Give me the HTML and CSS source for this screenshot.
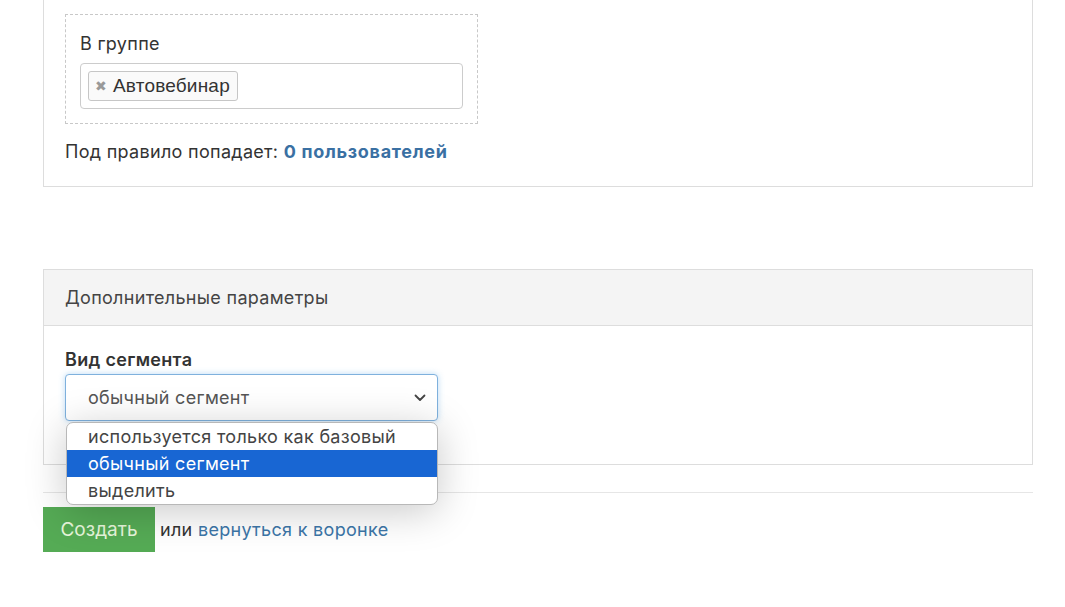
FILE: index.html
```html
<!DOCTYPE html>
<html lang="ru">
<head>
<meta charset="utf-8">
<title>Сегмент</title>
<link rel="stylesheet" href="styles.css">
</head>
<body>
<div class="page">
  <div class="panel panel-top">
    <div class="rule-box">
      <div class="rule-label">В группе</div>
      <div class="tag-input">
        <span class="chip"><span class="chip-x">✖</span>Автовебинар</span>
      </div>
    </div>
    <div class="rule-count">Под правило попадает: <a class="count-link" href="#">0 пользователей</a></div>
  </div>

  <div class="panel panel-extra">
    <div class="panel-head">Дополнительные параметры</div>
    <div class="panel-body">
      <div class="field-label">Вид сегмента</div>
      <div class="select-wrap">
        <div class="select">
          <span>обычный сегмент</span>
          <svg class="chev" width="12" height="8" viewBox="0 0 12 8"><path d="M1.5 1.5 L6 6 L10.5 1.5" fill="none" stroke="#444" stroke-width="1.8" stroke-linecap="round" stroke-linejoin="round"/></svg>
        </div>
        <div class="dropdown">
          <div class="opt">используется только как базовый</div>
          <div class="opt opt-sel">обычный сегмент</div>
          <div class="opt">выделить</div>
        </div>
      </div>
    </div>
  </div>

  <div class="actions">
    <button class="btn-create">Создать</button>
    <span class="or">или <a class="back-link" href="#">вернуться к воронке</a></span>
  </div>
</div>
</body>
</html>
```
FILE: styles.css
```css
html, body {
  margin: 0;
  padding: 0;
  background: #fff;
}
body {
  font-family: Inter, "Noto Sans", sans-serif;
  color: #333;
  font-size: 18px;
  letter-spacing: 0.3px;
}
.page {
  width: 990px;
  margin-left: 43px;
}
.panel {
  border: 1px solid #dddddd;
  box-sizing: border-box;
}
.panel-top {
  border-top: none;
  padding: 14px 21px 0 21px;
  height: 187px;
}
.rule-box {
  width: 413px;
  height: 110px;
  box-sizing: border-box;
  border: 1px dashed #c8c8c8;
  padding: 17px 14px 0 14px;
}
.rule-label {
  font-size: 18px;
  line-height: 24px;
  color: #333;
}
.tag-input {
  margin-top: 7px;
  height: 46px;
  width: 383px;
  box-sizing: border-box;
  border: 1px solid #cccccc;
  border-radius: 4px;
  padding: 7px 7px;
  display: flex;
  align-items: flex-start;
}
.chip {
  display: inline-flex;
  align-items: center;
  height: 30px;
  box-sizing: border-box;
  border: 1px solid #c6c6c6;
  border-radius: 3px;
  background: #fafafa;
  padding: 0 7px 0 5px;
  font-family: "Liberation Sans", Arial, sans-serif;
  font-size: 19px;
  letter-spacing: 0.2px;
  color: #333;
}
.chip-x {
  color: #999;
  font-family: "DejaVu Sans", sans-serif;
  font-size: 14px;
  margin-right: 6px;
  margin-left: 1px;
}
.rule-count {
  margin-top: 16px;
  line-height: 24px;
  color: #333;
}
.count-link {
  color: #3a70a3;
  font-weight: 700;
  letter-spacing: 0.7px;
  text-decoration: none;
}
.panel-extra {
  margin-top: 82px;
  height: 196px;
}
.panel-head {
  height: 56px;
  box-sizing: border-box;
  background: #f4f4f4;
  border-bottom: 1px solid #dddddd;
  padding: 0 21px;
  display: flex;
  align-items: center;
  color: #444;
}
.panel-body {
  padding: 22px 21px 0 21px;
}
.field-label {
  font-weight: 600;
  line-height: 24px;
  color: #333;
}
.select-wrap {
  position: relative;
  margin-top: 2px;
  width: 373px;
}
.select {
  height: 47px;
  box-sizing: border-box;
  border: 1px solid #7fb1dd;
  border-radius: 4px;
  box-shadow: 0 0 6px rgba(102, 175, 233, 0.45);
  padding: 0 11px 0 22px;
  display: flex;
  align-items: center;
  justify-content: space-between;
  color: #555;
  background: #fff;
}
.chev {
  display: block;
}
.dropdown {
  position: absolute;
  left: 1px;
  top: 48px;
  width: 372px;
  box-sizing: border-box;
  background: #fff;
  border: 1px solid #b8b8b8;
  border-radius: 7px;
  overflow: hidden;
  box-shadow: 0 6px 40px rgba(0, 0, 0, 0.22);
  padding: 0;
  z-index: 5;
}
.opt {
  height: 27px;
  line-height: 27px;
  padding-left: 21px;
  color: #444;
}
.opt-sel {
  background: #1866d3;
  color: #fff;
}
.actions {
  margin-top: 27px;
  border-top: 1px solid #e6e6e6;
  padding-top: 14px;
  display: flex;
  align-items: center;
}
.btn-create {
  width: 112px;
  height: 45px;
  border: none;
  background: #55ab55;
  color: #e7f6dc;
  font-family: Inter, "Noto Sans", sans-serif;
  font-size: 19px;
  letter-spacing: 0;
  padding: 0;
  margin-right: 5px;
}
.or {
  color: #333;
}
.back-link {
  color: #3c76a8;
  text-decoration: none;
}
```
